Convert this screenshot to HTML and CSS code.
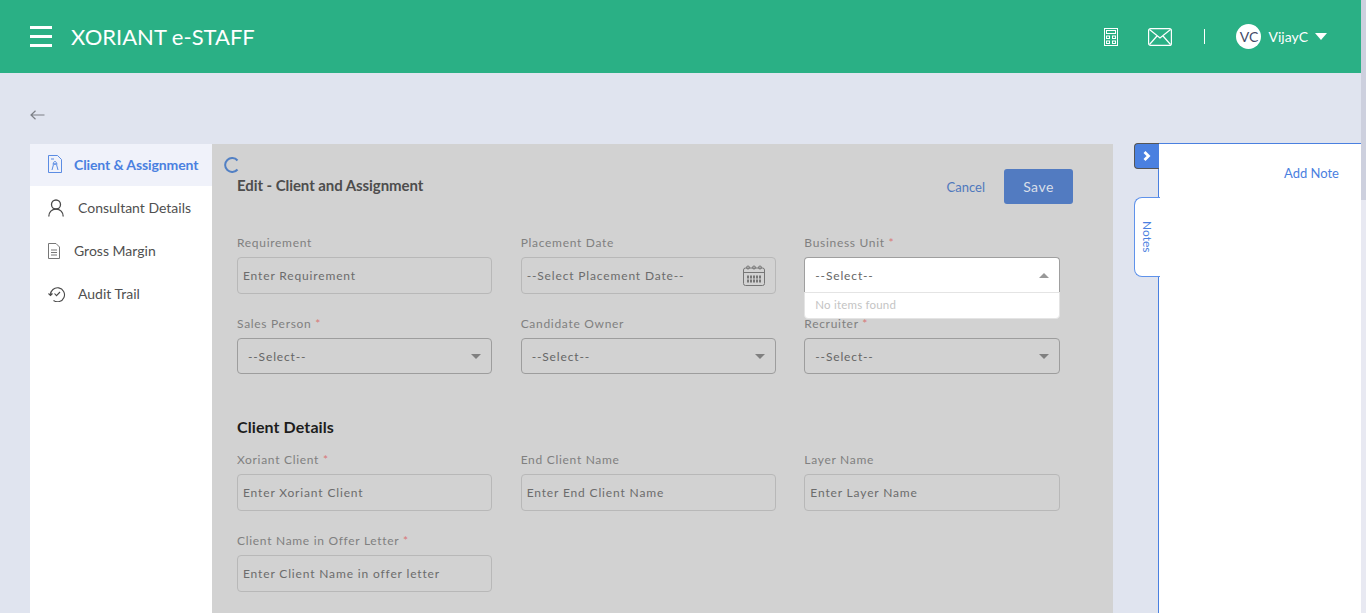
FILE: index.html
```html
<!DOCTYPE html>
<html lang="en">
<head>
<meta charset="utf-8">
<title>Xoriant e-Staff</title>
<link rel="stylesheet" href="styles.css">
</head>
<body>
<div class="page">
  <header class="topbar">
    <div class="brand">
      <div class="burger"><span></span><span></span><span></span></div>
      <div class="brand-name">XORIANT e-STAFF</div>
    </div>
    <div class="tools">
      <svg class="ico-calc" width="14" height="18" viewBox="0 0 14 18" fill="none" stroke="#fff" stroke-width="1"><rect x=".5" y=".5" width="13" height="17"/><rect x="2.500" y="2.500" width="9" height="3"/><rect x="2.500" y="8" width="3" height="2.500"/><rect x="8.500" y="8" width="3" height="2.500"/><rect x="2.500" y="13" width="3" height="2.500"/><rect x="8.500" y="13" width="3" height="2.500"/></svg>
      <svg class="ico-mail" width="24" height="18" viewBox="0 0 24 18" fill="none" stroke="#fff" stroke-width="1.200"><rect x=".6" y=".6" width="22.800" height="16.800" rx="2"/><path d="M1.500 1.500 12 10 22.500 1.500M1.500 16.500 9 8M22.500 16.500 15 8"/></svg>
      <span class="sep"></span>
      <div class="user">
        <span class="avatar">VC</span>
        <span class="uname">VijayC</span>
        <span class="caret"></span>
      </div>
    </div>
  </header>
  <main class="body">
    <div class="backrow">
      <svg width="15" height="10" viewBox="0 0 15 10" fill="none" stroke="#7c7f86" stroke-width="1.200"><path d="M14.500 5H1M5.500.8 1 5l4.500 4.200"/></svg>
    </div>
    <div class="columns">
      <nav class="side">
        <a class="side-item active">
          <svg width="14" height="18" viewBox="0 0 14 18" fill="none" stroke="#4a80e0" stroke-width=".9"><path d="M.5.5h9l4 4v13H.5z"/><path d="M3 4h3M7 6.500a1.400 1.400 0 1 1-.1 0M4.500 9h5M5.500 9.500 4 15M8.500 9.500 10 15"/></svg>
          <span class="lbl-a">Client &amp; Assignment</span>
        </a>
        <a class="side-item">
          <svg class="i-user" width="16" height="18" viewBox="0 0 16 18" fill="none" stroke="#4a4a4a" stroke-width="1.300"><circle cx="8" cy="5.500" r="4.500"/><path d="M.8 17.500c0-4.500 3-7.300 7.200-7.300s7.200 2.800 7.200 7.300"/></svg>
          <span>Consultant Details</span>
        </a>
        <a class="side-item">
          <svg width="12" height="16" viewBox="0 0 12 16" fill="none" stroke="#777" stroke-width="1"><path d="M.5.5h7.500l3.500 3.500v11.500h-11zM3 7h6M3 9.500h6M3 12h6"/></svg>
          <span>Gross Margin</span>
        </a>
        <a class="side-item">
          <svg class="i-audit" width="18" height="16" viewBox="0 0 18 16" fill="none" stroke="#4a4a4a" stroke-width="1.100"><path d="M2.500 9a7 7 0 1 1 3 5.500M.5 7.500l2 2 2-2M6.500 7.500l2 2.200 3.500-3.700"/></svg>
          <span>Audit Trail</span>
        </a>
      </nav>
      <section class="panel">
        <svg class="spinner" width="16" height="16" viewBox="0 0 16 16" fill="none" stroke="#5280c4" stroke-width="2"><path d="M14.500 3.500A7 7 0 1 0 14.500 12.500"/></svg>
        <div class="panel-head">
          <h1 class="title">Edit - Client and Assignment</h1>
          <div class="actions">
            <a class="cancel">Cancel</a>
            <button class="save" type="button">Save</button>
          </div>
        </div>
        <div class="grid">
          <div class="field"><div class="label">Requirement</div><div class="box input">Enter Requirement</div></div>
          <div class="field"><div class="label">Placement Date</div><div class="box input date">--Select Placement Date--
            <svg width="22" height="21" viewBox="0 0 22 21" fill="none" stroke="#767676" stroke-width="1"><rect x=".5" y="3" width="21" height="17.500" rx="2"/><path d="M.5 7.500h21"/><path stroke-width="3" stroke-dasharray="2 1" d="M4 12h14M4 16h14"/><circle cx="5" cy="2.500" r="1.500"/><circle cx="11" cy="2.500" r="1.500"/><circle cx="17" cy="2.500" r="1.500"/></svg>
          </div></div>
          <div class="field open"><div class="label">Business Unit <i>*</i></div>
            <div class="box select white">--Select--<span class="tri up"></span></div>
            <div class="menu">No items found</div>
          </div>
          <div class="field"><div class="label">Sales Person <i>*</i></div><div class="box select">--Select--<span class="tri"></span></div></div>
          <div class="field"><div class="label">Candidate Owner</div><div class="box select">--Select--<span class="tri"></span></div></div>
          <div class="field"><div class="label">Recruiter <i>*</i></div><div class="box select">--Select--<span class="tri"></span></div></div>
        </div>
        <h2 class="section">Client Details</h2>
        <div class="grid">
          <div class="field"><div class="label">Xoriant Client <i>*</i></div><div class="box input">Enter Xoriant Client</div></div>
          <div class="field"><div class="label">End Client Name</div><div class="box input">Enter End Client Name</div></div>
          <div class="field"><div class="label">Layer Name</div><div class="box input">Enter Layer Name</div></div>
          <div class="field"><div class="label">Client Name in Offer Letter <i>*</i></div><div class="box input">Enter Client Name in offer letter</div></div>
        </div>
      </section>
      <aside class="notes">
        <div class="tabs">
          <div class="toggle"><svg width="8" height="10" viewBox="0 0 8 10" fill="none" stroke="#fff" stroke-width="2.800"><path d="M1.500 1 5.500 5l-4 4"/></svg></div>
          <div class="notes-tab"><span>Notes</span></div>
        </div>
        <div class="notes-body"><a class="add-note">Add Note</a></div>
      </aside>
    </div>
  </main>
</div>
<div class="scrollbar"><div class="thumb"></div></div>
</body>
</html>
```
FILE: styles.css
```css
* { box-sizing: border-box; }
html, body { margin: 0; height: 100%; overflow: hidden; }
body { display: flex; font-family: "Lato", "Liberation Sans", sans-serif; background: #e0e4ef; color: #333; }
.page { flex: 1; min-width: 0; height: 613px; overflow: hidden; display: flex; flex-direction: column; }
.scrollbar { width: 5px; height: 613px; background: #e8e9f2; flex: none; }
.thumb { height: 200px; background: #cdd0de; }

.topbar { height: 73px; flex: none; background: #2ab085; color: #fff; display: flex; align-items: center; justify-content: space-between; padding: 0 34px 0 30px; }
.brand { display: flex; align-items: center; gap: 19px; }
.burger { width: 22px; display: flex; flex-direction: column; gap: 6px; }
.burger span { height: 3px; background: #fff; display: block; }
.brand-name { font-size: 22px; line-height: 26px; }
.tools { display: flex; align-items: center; }
.ico-calc { margin-right: 30px; }
.ico-mail { margin-right: 32px; }
.sep { width: 1px; height: 15px; background: #fff; margin-right: 31px; }
.user { display: flex; align-items: center; }
.avatar { width: 25px; height: 25px; border-radius: 50%; background: #fff; color: #444a66; font-size: 14px; display: flex; align-items: center; justify-content: center; margin-right: 7px; }
.uname { font-size: 14px; margin-right: 7px; }
.caret { width: 0; height: 0; border-left: 6.500px solid transparent; border-right: 6.500px solid transparent; border-top: 7px solid #fff; }

.body { flex: 1; min-height: 0; padding: 0 0 0 30px; }
.backrow { height: 71px; display: flex; align-items: center; padding-top: 12px; }
.columns { display: flex; align-items: stretch; height: 469px; }

.side { width: 182px; flex: none; background: #fff; }
.side-item { height: 43px; display: flex; align-items: center; gap: 12px; padding: 0 0 0 18px; font-size: 14px; color: #505050; }
.side-item:first-child { height: 42px; padding-bottom: 2px; }
.side-item svg { flex: none; }
.side-item:nth-child(3) svg { margin-right: 2px; }
.i-user { margin-right: 2px; }
.active { background: #f0f2fa; color: #4a80e0; font-weight: 700; letter-spacing: -.1px; }

.panel { width: 901px; flex: none; background: #d2d2d2; padding: 25px 40px 0 25px; position: relative; }
.spinner { position: absolute; left: 11px; top: 13px; }
.panel-head { height: 67px; display: flex; justify-content: space-between; align-items: flex-start; }
.title { margin: 7px 0 0; font-size: 15px; line-height: 18px; font-weight: 700; color: #4d4d4d; letter-spacing: -.07px; }
.actions { display: flex; align-items: center; gap: 19px; }
.cancel { font-size: 13px; color: #4f78bd; }
.save { width: 69px; height: 35px; border: 0; border-radius: 3px; background: #527bc1; color: #d9dfe9; font: 14px "Lato", sans-serif; letter-spacing: .5px; }

.grid { display: grid; grid-template-columns: repeat(3, 255.330px); column-gap: 28.330px; row-gap: 23px; }
.field { position: relative; }
.label { height: 14px; line-height: 14px; margin-bottom: 7px; font-size: 12px; letter-spacing: .7px; color: #808080; }
.label i { color: #d97878; font-style: normal; }
.box { border: 1px solid #b8b8b8; border-radius: 4px; font-size: 12px; letter-spacing: .85px; color: #6c6c6c; display: flex; align-items: center; justify-content: space-between; }
.input { height: 37px; padding: 0 5px; }
.date { padding-right: 10px; }
.select { height: 36px; padding: 0 10px; border-color: #9d9d9d; color: #666; }
.white { background: #fff; border-radius: 4px 4px 0 0; height: 35px; border-color: #9f9f9f; border-bottom: 0; }
.tri { width: 0; height: 0; border-left: 5px solid transparent; border-right: 5px solid transparent; border-top: 5px solid #808080; }
.tri.up { border-top: 0; border-bottom: 5px solid #999; }
.menu { position: absolute; left: 0; right: 0; top: 56px; height: 27px; background: #fff; border: 1px solid #e4e4e4; border-radius: 0 0 4px 4px; font-size: 11.500px; color: #c4c4c4; padding-left: 10px; line-height: 24px; letter-spacing: .2px; z-index: 2; }
.section { margin: 0; height: 79px; padding-top: 43px; font-size: 16px; line-height: 19px; font-weight: 700; color: #1d1d1d; letter-spacing: .1px; }

.notes { flex: 1; display: flex; margin-left: 21px; min-width: 0; }
.tabs { width: 24px; flex: none; position: relative; z-index: 1; }
.toggle { width: 25px; height: 26px; background: #4a80e0; border: 1px solid #555; border-right: 0; border-radius: 4px 0 0 4px; display: flex; align-items: center; justify-content: center; margin-top: -1px; }
.notes-tab { width: 26px; height: 80px; margin-top: 28px; background: #fff; border: 1px solid #5f92ea; border-right: 0; border-radius: 8px 0 0 8px; display: flex; align-items: center; justify-content: center; color: #4a80e0; font-size: 12px; }
.notes-tab span { writing-mode: vertical-rl; }
.notes-body { flex: 1; background: #fff; border-left: 1px solid #4a80e0; border-top: 1px solid #4a80e0; margin-top: -1px; padding: 18px 22px 0 0; text-align: right; }
.add-note { color: #4a80e0; font-size: 13px; line-height: 17px; }
```
